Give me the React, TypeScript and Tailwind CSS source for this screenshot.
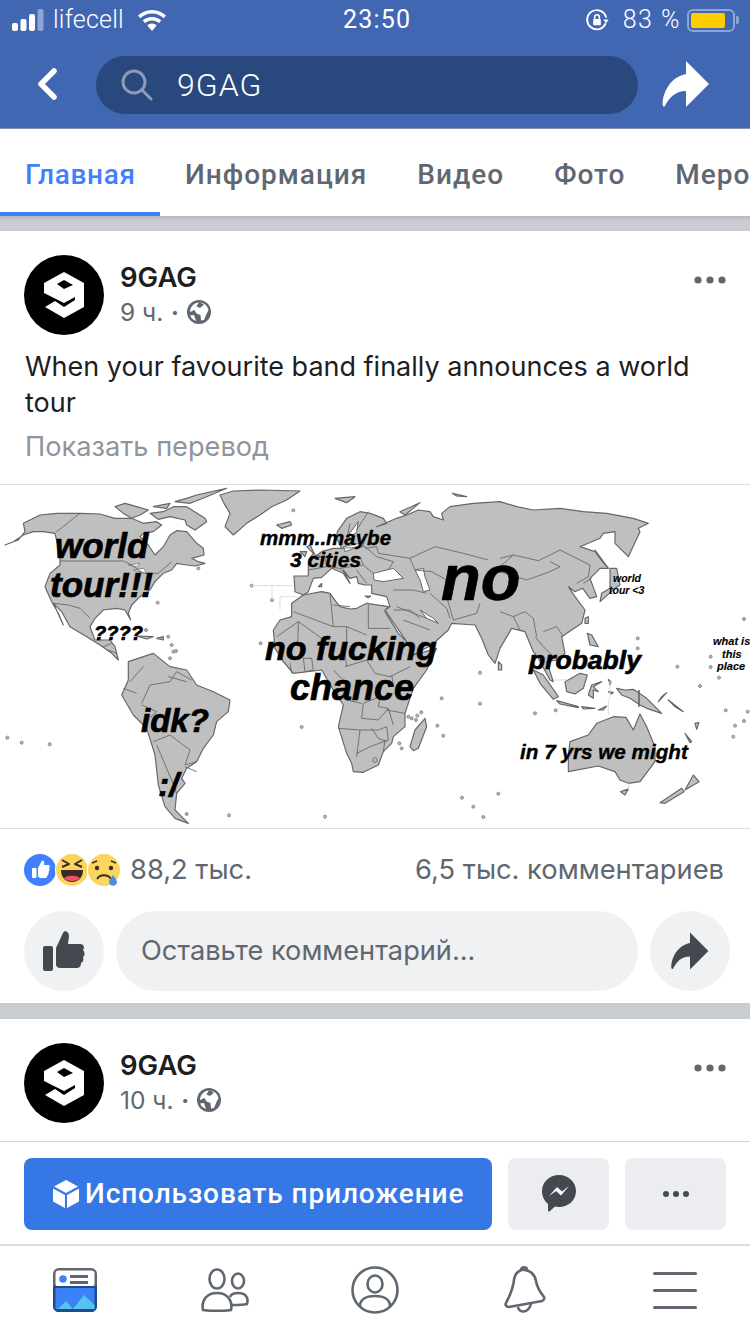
const land = [
  // Africa
  "M910,330 L965,320 L990,325 L1008,350 L1020,365 L1050,372 L1070,370 L1100,355 L1165,365 L1155,380 L1195,445 L1220,470 L1240,510 L1310,490 L1280,555 L1240,610 L1215,685 L1215,725 L1180,755 L1175,775 L1150,800 L1135,840 L1090,862 L1060,860 L1055,835 L1040,805 L1015,725 L1030,660 L1000,615 L965,555 L880,565 L850,530 L825,490 L820,435 L840,405 L875,395 L875,355 Z",
  // Eurasia
  "M910,330 L885,320 L882,273 L925,273 L925,230 L965,200 L1000,190 L1025,190 L1010,160 L1012,140 L1040,100 L1080,80 L1110,85 L1150,100 L1160,115 L1130,125 L1190,100 L1220,90 L1255,75 L1290,80 L1300,95 L1330,105 L1325,85 L1350,65 L1420,55 L1500,50 L1550,65 L1600,75 L1680,70 L1750,80 L1820,85 L1900,100 L1945,115 L1915,130 L1920,140 L1885,215 L1845,175 L1845,140 L1810,145 L1800,160 L1740,185 L1785,200 L1825,250 L1800,250 L1770,280 L1790,335 L1770,340 L1748,310 L1725,320 L1705,305 L1725,335 L1755,375 L1745,415 L1715,435 L1685,455 L1695,505 L1670,525 L1640,530 L1660,590 L1650,585 L1615,520 L1600,500 L1575,440 L1535,430 L1500,490 L1485,535 L1465,510 L1445,460 L1425,420 L1355,415 L1345,435 L1295,480 L1240,510 L1220,470 L1155,375 L1170,365 L1160,335 L1115,325 L1115,300 L1095,300 L1075,295 L1070,275 L1050,280 L1030,255 L1050,295 L1030,265 L995,250 L965,277 L940,280 L925,320 Z",
  // South America
  "M385,530 L430,515 L460,505 L510,545 L560,555 L590,600 L640,620 L690,645 L685,680 L650,710 L640,750 L610,790 L590,830 L560,850 L545,880 L555,895 L530,925 L525,975 L565,1015 L525,1000 L495,965 L475,900 L465,810 L440,730 L400,690 L365,630 L385,585 Z",
  // Greenland
  "M660,30 L700,18 L780,15 L900,18 L860,45 L815,65 L780,90 L740,115 L700,150 L675,125 L690,85 L672,55 Z",
  // small
  "M1495,530 L1505,540 L1505,555 L1495,555 Z",
  "M1230,785 L1245,735 L1275,700 L1280,725 L1255,790 L1240,797 Z",
  "M1755,400 L1765,395 L1765,415 L1755,415 Z",
  "M1762,445 L1775,450 L1795,485 L1770,480 Z",
  "M1785,195 L1825,250 L1800,220 Z",
  "M1830,250 L1850,250 L1860,300 L1845,310 L1800,350 L1805,325 L1830,310 Z",
];
const northAm = [
  "M15,165 L40,155 L55,150 L75,125 L70,100 L120,75 L170,70 L240,70 L300,72 L345,85 L395,85 L430,100 L470,95 L485,105 L460,125 L430,130 L420,140 L445,165 L465,195 L490,170 L510,135 L530,122 L560,125 L590,160 L610,175 L612,195 L575,205 L595,215 L615,220 L585,228 L560,225 L530,220 L515,240 L490,250 L465,275 L450,300 L420,320 L395,345 L385,370 L392,390 L375,360 L350,355 L310,360 L285,385 L270,410 L285,450 L330,450 L345,470 L355,510 L335,490 L300,465 L260,440 L210,410 L185,365 L160,340 L190,405 L175,370 L155,335 L135,290 L150,250 L180,225 L180,195 L165,130 L130,125 L100,125 L70,135 L40,155 Z",
  "M345,50 L375,40 L410,50 L445,60 L420,75 L395,85 L370,70 Z",
  "M450,70 L490,65 L520,50 L560,50 L615,85 L620,95 L585,120 L560,105 L555,90 L510,80 L475,88 Z",
  "M525,35 L560,25 L590,15 L680,-5 L620,20 L570,40 Z",
  "M460,50 L510,40 L500,55 Z",
  "M410,438 L460,440 L440,447 Z",
  "M470,445 L490,440 L490,450 Z",
];
const europeIslands = [
  "M80,105 L120,95 L125,105 L95,115 Z",
  "M255,25 L315,20 L290,38 Z",
  "M180,165 L195,195 L215,200 L175,210 L190,190 L170,170 Z",
  "M150,185 L170,185 L165,200 Z",
  "M450,65 L510,38 L465,75 Z",
  "M607,10 L650,20 L620,18 Z",
  "M205,290 L215,280 L215,290 Z",
  "M345,318 L362,318 L355,323 Z",
];
const water = [
  "M370,250 L430,235 L460,265 L400,275 L372,270 Z",
  "M495,240 L520,235 L525,260 L540,300 L520,305 L510,270 Z",
  "M510,360 L550,385 L565,400 L530,385 Z",
  "M295,135 L325,95 L320,125 L300,145 Z",
  "M280,170 L330,160 L345,145 L340,165 L285,185 Z",
];
const borderA = [
  "M130,365 L250,410 L290,410 L350,435", "M240,310 L250,410", "M355,345 L355,415 L420,415", "M80,440 L145,395 L215,445", "M145,395 L143,470", "M290,410 L290,460", "M250,345 L300,350",
  "M385,190 L480,205 L555,170 L640,190 L715,210", "M480,205 L495,240 L545,245 L590,270", "M590,320 L610,390 L680,370 L690,340", "M430,300 L490,300 L530,310", "M540,310 L590,355 L600,385", "M430,360 L480,360 L510,385", "M275,175 L345,170 L380,200 L430,215 L415,240", "M270,235 L340,225 L370,250", "M230,230 L270,235 L300,265", "M175,240 L230,230 L220,180", "M355,65 L320,120", "M345,175 L380,170 L385,190", "M300,100 L290,150", "M320,240 L350,280", "M300,210 L330,200 L340,225", "M440,350 L530,385", "M460,390 L540,420",
];
const borderB = ["M180,213 L370,213 L395,225 L430,250 L475,250 L515,215", "M240,70 L170,125", "M160,340 L205,345 L240,355 L270,385", "M310,470 L335,460", "M325,480 L350,490"];
const borderSA = ["M390,590 L430,545", "M425,655 L450,600 L510,590 L530,560 L575,585", "M425,660 L470,680 L430,715", "M460,770 L510,750 L570,795 L555,840 L590,830", "M470,780 L515,885 L530,925", "M555,845 L590,860", "M370,610 L410,625", "M505,575 L560,590"];
const borderD = ["M100,65 L130,100", "M160,55 L165,95 L190,90 L185,55 Z", "M285,40 L290,80", "M285,80 L350,60 L375,100 L420,110 L480,80", "M250,90 L290,130", "M425,105 L430,135", "M390,170 L340,190 L335,235 L385,240 L415,205 L385,200 L390,170", "M265,265 L330,270 L320,350", "M330,270 L385,270 L410,260 L415,300 L360,320 L320,340", "M365,265 L385,295 L410,305", "M410,210 L465,220", "M415,205 L430,255", "M400,335 L405,300", "M290,180 L335,190", "M120,70 L125,100"];
const borderC = ["M0,205 L40,195 L115,212 L180,180 L240,210 L270,225 L265,260 L230,280", "M0,245 L80,270 L150,245 L180,230 L150,215", "M250,280 L275,265", "M0,365 L40,380 L75,365 L100,385 L110,440", "M130,425 L170,410 L190,440", "M105,440 L130,470 L160,500", "M40,380 L60,420", "M0,230 L40,195"];
const east = [
  "M100,90 L130,105 L175,170 L160,178 L120,130 Z",
  "M195,125 L240,100 L262,105 L250,145 L225,162 L200,155 Z",
  "M170,182 L235,200 L235,203 L180,192 Z",
  "M245,200 L285,205 L250,207 Z",
  "M295,210 L320,198 L310,210 Z",
  "M265,165 L275,135 L305,125 L280,140 L295,155 L280,150 L280,175 Z",
  "M350,145 L375,150 L400,148 L440,175 L485,220 L440,205 L420,195 L390,175 L365,165 Z",
  "M205,345 L210,305 L265,285 L290,250 L340,230 L378,232 L400,270 L420,222 L440,260 L465,320 L465,365 L420,425 L385,430 L360,420 L345,395 L295,378 L205,395 Z",
  "M362,455 L385,447 L375,465 Z",
  "M480,488 L545,445 L552,455 L495,490 Z",
  "M555,450 L580,405 L597,425 Z",
  "M475,185 L500,158 L485,170 Z",
  "M505,180 L550,215 L525,200 Z",
  "M555,280 L575,305 L570,308 Z",
  "M585,250 L597,248 L590,268 Z",
  "M325,118 L333,125 L330,135 Z",
  "M325,155 L340,157 L335,162 Z",
];
const dots = [[22,758],[65,773],[149,778],[905,726],[560,987],[687,991],[975,995],[473,353],[595,250],[782,475],[880,76],[755,302],[816,345],[1386,938],[1420,965],[1450,996],[1495,926],[1440,563],[1325,640],[1440,656],[1605,685],[1667,676],[1913,460],[1913,490],[2032,545],[2100,603],[2132,515],[2132,546],[2157,578],[2232,402],[2177,676],[2205,722],[2243,680],[2232,708],[2200,755],[1312,722],[1330,752],[1235,700],[1248,705],[1198,775],[1205,790],[505,455],[515,480],[520,500],[510,520],[528,498],[438,435],[1225,695],[1252,692],[1264,682]];

function Logo() {
  return (
    <svg viewBox="0 0 80 80" className="w-[80px] h-[80px] shrink-0">
      <circle cx="40" cy="40" r="40" fill="#000" />
      <path fillRule="evenodd" fill="#fff" d="M40 17 L60 28 L60 52 L40 63 L21 52 L31 46 L40 52 L51 45 L51 42 L40 48 L20 38 L20 28 Z M33 29 L40 34 L49 30 L40 25 Z" />
    </svg>
  );
}
function Globe() {
  return (
    <svg viewBox="0 0 24 24" className="w-[24px] h-[24px]">
      <circle cx="12" cy="12" r="12" fill="#606770" />
      <path fill="#fff" d="M12 2.5 C17 2.5 20.5 5.5 21.5 10 L19.5 14 L17 20 L14 20.5 L13.5 15 L9.5 13.5 L7.5 10 L3 12 C3 7 7 2.5 12 2.5 Z M3 15.5 L7 15 L9 21 C6 20 4 18 3 15.5 Z" />
      <path fill="#606770" d="M12 2 L17 4.5 L13 8 L9.5 6.5 Z" />
    </svg>
  );
}
function Dots() {
  return (
    <svg viewBox="0 0 32 8" className="w-[32px] h-[8px]">
      <circle cx="4" cy="4" r="3.6" fill="#606770" /><circle cx="16" cy="4" r="3.6" fill="#606770" /><circle cx="28" cy="4" r="3.6" fill="#606770" />
    </svg>
  );
}
function Header({ time }: { time: string }) {
  return (
    <div className="flex pl-[24px] pr-[24px] pt-[24px] gap-[16px]">
      <Logo />
      <div className="flex flex-col flex-1">
        <div className="text-[27.5px] leading-[32px] font-semibold text-[#1c1e21] mt-[6px]">9GAG</div>
        <div className="flex items-center text-[24.5px] leading-[36px] text-[#606770] mt-[1px]">
          <span>{time}</span>
          <span className="mx-[8px] text-[13px]">•</span>
          <Globe />
        </div>
      </div>
      <div className="mt-[21px]"><Dots /></div>
    </div>
  );
}

export default function App() {
  return (
    <div className="w-[750px] h-[1334px] overflow-hidden flex flex-col bg-white font-['Inter','Liberation_Sans',sans-serif]">
      {/* status bar */}
      <div className="h-[40px] shrink-0 bg-[#4267b2] flex items-center justify-between pl-[12px] pr-[11px] text-white relative">
        <div className="flex items-center">
          <svg viewBox="0 0 32 22" className="w-[32px] h-[22px]">
            <rect x="0" y="14" width="6" height="8" rx="2" fill="#fff" />
            <rect x="8.5" y="10" width="6" height="12" rx="2" fill="#fff" />
            <rect x="17" y="5" width="6" height="17" rx="2" fill="#fff" />
            <rect x="25.5" y="0" width="6" height="22" rx="2" fill="#8ea4d2" />
          </svg>
          <span className="ml-[9px] text-[25px] leading-[30px] font-['Roboto',sans-serif] font-light tracking-[0.2px]">lifecell</span>
          <svg viewBox="0 0 28 21" className="ml-[14px] w-[28px] h-[21px]" fill="#fff">
            <path d="M14 0 C19.5 0 24.4 2.2 28 5.6 L25.6 8.2 C22.6 5.4 18.5 3.6 14 3.6 C9.5 3.6 5.4 5.4 2.4 8.2 L0 5.6 C3.6 2.2 8.5 0 14 0 Z" />
            <path d="M14 7 C17.6 7 20.9 8.4 23.3 10.6 L20.9 13.2 C19.1 11.5 16.7 10.5 14 10.5 C11.3 10.5 8.9 11.5 7.1 13.2 L4.7 10.6 C7.1 8.4 10.4 7 14 7 Z" />
            <path d="M14 13.6 C15.9 13.6 17.4 14.3 18.6 15.4 L14 21 L9.4 15.4 C10.6 14.3 12.1 13.6 14 13.6 Z" />
          </svg>
        </div>
        <span className="absolute left-[343px] top-[5px] text-[25px] leading-[30px] font-['Roboto',sans-serif] tracking-[1.2px]">23:50</span>
        <div className="flex items-center">
          <svg viewBox="0 0 24 24" className="w-[23px] h-[23px]" fill="none" stroke="#fff" strokeWidth="2">
            <path d="M20.5 15 A10 10 0 1 1 21 9" />
            <path d="M23.5 11 L18 11 L21 15 Z" fill="#fff" stroke="none" />
            <rect x="7.5" y="10.5" width="8" height="6.5" rx="1" fill="#fff" stroke="none" />
            <path d="M9 11 V8.5 a2.5 2.5 0 0 1 5 0 V11" strokeWidth="1.6" />
          </svg>
          <span className="ml-[14px] text-[25px] leading-[30px] font-['Roboto',sans-serif] font-light tracking-[1.5px]">83 %</span>
          <div className="ml-[6px] w-[48px] h-[23px] rounded-[6px] border-2 border-[#8ea4d2] p-[2px]">
            <div className="w-[34px] h-[15px] bg-[#ffcc00] rounded-[2px]" />
          </div>
          <div className="ml-[1px] w-[3px] h-[8px] rounded-r-[2px] bg-[#8ea4d2]" />
        </div>
      </div>
      {/* nav */}
      <div className="h-[89px] shrink-0 bg-[#4267b2] border-b border-[#8592ab] flex items-center pl-[36px]">
        <svg viewBox="0 0 22 34" className="w-[22px] h-[34px]" fill="none" stroke="#fff" strokeWidth="5.5" strokeLinecap="round" strokeLinejoin="round">
          <path d="M18 4 L5 17 L18 30" />
        </svg>
        <div className="ml-[38px] mt-[2px] w-[542px] h-[58px] rounded-[29px] bg-[#29487d] flex items-center pl-[25px]">
          <svg viewBox="0 0 32 32" className="w-[32px] h-[32px]" fill="none" stroke="#8f9bb5" strokeWidth="3" strokeLinecap="round">
            <circle cx="13" cy="13" r="11" />
            <path d="M21 21 L30 30" />
          </svg>
          <span className="ml-[24px] text-[32px] text-white font-['Roboto',sans-serif] font-light tracking-[1px] leading-[36px]">9GAG</span>
        </div>
        <svg viewBox="0 0 50 50" className="ml-[23px] w-[50px] h-[50px]" fill="#fff">
          <path d="M25 2 L48 25 L25 48 L25 32 C14 32 8 39 4 47 C1 50 1 42 3 36 C7 24 15 17 25 15 Z" />
        </svg>
      </div>
      {/* tabs */}
      <div className="h-[87px] shrink-0 bg-white flex overflow-hidden text-[28px] font-medium text-[#606770] font-['Roboto','Inter',sans-serif] tracking-[1px] whitespace-nowrap">
        <div className="pl-[25px] pt-[8px] w-[160px] shrink-0 flex items-center border-b-4 border-[#4080ff] text-[#4080ff] tracking-[0.7px]">Главная</div>
        <div className="px-[25px] pt-[4px] shrink-0 flex items-center">Информация</div>
        <div className="px-[25px] pt-[4px] shrink-0 flex items-center">Видео</div>
        <div className="px-[25px] pt-[4px] shrink-0 flex items-center">Фото</div>
        <div className="pl-[25px] pt-[4px] shrink-0 flex items-center">Меро</div>
      </div>
      <div className="h-[15px] shrink-0 bg-gradient-to-b from-[#b5b7bb] from-0% to-[#c9ccd1] to-30%" />
      {/* post */}
      <div className="shrink-0 bg-white">
        <Header time="9 ч." />
        <div className="pl-[25px] pr-[24px] pt-[14px] text-[27px] leading-[36px] text-[#1c1e21]">When your favourite band finally announces a world tour</div>
        <div className="pl-[25px] pt-[8px] pb-[19px] text-[27.2px] leading-[36px] text-[#90949c]">Показать перевод</div>
        <div className="relative h-[345px] border-y border-[#dadde1] overflow-hidden italic font-bold text-black font-['Liberation_Sans',sans-serif] [-webkit-text-stroke:0.7px_#000]">
          <svg viewBox="0 0 2250 1032" className="w-[750px] h-[344px] blur-[0.4px]">
            <g fill="#bfbfbf" stroke="#666" strokeWidth="3.5" strokeLinejoin="round">
              {land.map((d, i) => <path key={i} d={d} />)}
              <g transform="translate(0,15)">{northAm.map((d, i) => <path key={i} d={d} />)}</g>
              <g transform="translate(750,15)">{europeIslands.map((d, i) => <path key={i} d={d} />)}</g>
              <g transform="translate(1500,465)">{east.map((d, i) => <path key={i} d={d} />)}</g>
            </g>
            <g transform="translate(750,15)" fill="#fff" stroke="#666" strokeWidth="3" strokeLinejoin="round">
              {water.map((d, i) => <path key={i} d={d} />)}
            </g>
            <g transform="translate(0,15)" fill="#fff" stroke="#666" strokeWidth="2">
              <path d="M385,225 L420,220 L410,230 Z" />
              <path d="M400,240 L430,235 L440,250 L420,245 Z" />
            </g>
            <g fill="none" stroke="#666" strokeWidth="2.6" strokeLinejoin="round">
              <g transform="translate(750,15)">{borderA.map((d, i) => <path key={i} d={d} />)}</g>
              <g transform="translate(0,15)">{borderB.map((d, i) => <path key={i} d={d} />)}</g>
              {borderSA.map((d, i) => <path key={i} d={d} />)}
              <g transform="translate(750,465)">{borderD.map((d, i) => <path key={i} d={d} />)}<circle cx="375" cy="360" r="7" /></g>
              <g transform="translate(1500,15)">{borderC.map((d, i) => <path key={i} d={d} />)}</g>
            </g>
            <path d="M1917,615 V665" stroke="#666" strokeWidth="5" fill="none" />
            <g fill="#bfbfbf" stroke="#777" strokeWidth="2.5">
              {dots.map(([x, y], i) => <circle key={i} cx={x} cy={y} r="4.5" />)}
            </g>
            <path d="M755,302 H880 M816,302 V345 M840,375 V335 H900 M1660,585 H1700 M1825,590 H1830 V640 M1825,640 V690 M1885,895 V910" fill="none" stroke="#ddd" strokeWidth="3" />
          </svg>
          <span className="absolute left-[55px] top-[41px] text-[35px] leading-[40px]">world</span>
          <span className="absolute left-[50px] top-[80px] text-[35px] leading-[40px]">tour!!!</span>
          <span className="absolute left-[94px] top-[136px] text-[20px] leading-[24px]">????</span>
          <span className="absolute left-[141px] top-[216px] text-[33px] leading-[40px]">idk?</span>
          <span className="absolute left-[158px] top-[279px] text-[34px] leading-[40px]">:/</span>
          <span className="absolute left-[260px] top-[41px] text-[20.5px] leading-[24px] [-webkit-text-stroke:0.4px_#000]">mmm..maybe</span>
          <span className="absolute left-[290px] top-[63px] text-[21px] leading-[24px] [-webkit-text-stroke:0.4px_#000]">3 cities</span>
          <span className="absolute left-[265px] top-[143px] text-[34px] leading-[40px]">no fucking</span>
          <span className="absolute left-[290px] top-[183px] text-[36px] leading-[40px]">chance</span>
          <span className="absolute left-[441px] top-[58px] text-[65px] leading-[70px]">no</span>
          <span className="absolute left-[613px] top-[87px] text-[10.5px] leading-[12px] [-webkit-text-stroke:0.1px_#000]">world</span>
          <span className="absolute left-[609px] top-[99px] text-[10.5px] leading-[12px] [-webkit-text-stroke:0.1px_#000]">tour &lt;3</span>
          <span className="absolute left-[529px] top-[159px] text-[26.5px] leading-[32px]">probably</span>
          <span className="absolute left-[713px] top-[150px] text-[11px] leading-[13px] whitespace-nowrap [-webkit-text-stroke:0.1px_#000]">what is</span>
          <span className="absolute left-[722px] top-[163px] text-[11px] leading-[13px] [-webkit-text-stroke:0.1px_#000]">this</span>
          <span className="absolute left-[717px] top-[175px] text-[11px] leading-[13px] [-webkit-text-stroke:0.1px_#000]">place</span>
          <span className="absolute left-[520px] top-[255px] text-[20.7px] leading-[24px] whitespace-nowrap [-webkit-text-stroke:0.4px_#000]">in 7 yrs we might</span>
        </div>
        {/* stats */}
        <div className="h-[82px] flex items-center justify-between pl-[24px] pr-[26px] text-[27.3px] text-[#606770]">
          <div className="flex items-center">
            <svg viewBox="0 0 96 32" className="w-[96px] h-[32px]">
              <circle cx="16" cy="16" r="16" fill="#4080ff" />
              <rect x="8" y="14" width="4.5" height="10" rx="1" fill="#fff" />
              <path fill="#fff" d="M14 14 L18 6.5 C20 6 20.5 8 20 11 L24.5 11 C26 11 26 13 25 14 C26 15.5 25.5 17 24.5 17.5 C25 19 24.5 20.5 23.5 21 C23.5 23 22.5 24 21 24 L16 24 L14 22.5 Z" />
              <circle cx="48" cy="16" r="17" fill="#fff" />
              <circle cx="48" cy="16" r="16" fill="#fcd561" />
              <path d="M37 16 H59 C59 24 54 28 48 28 C42 28 37 24 37 16 Z" fill="#3d2a26" />
              <path d="M40 24 C44 21 52 21 56 24 C53 28 43 28 40 24 Z" fill="#f25268" />
              <path d="M38 6 L45 10 L38 13 M58 6 L51 10 L58 13" fill="none" stroke="#3d2a26" strokeWidth="2" strokeLinejoin="round" />
              <circle cx="80" cy="16" r="17" fill="#fff" />
              <circle cx="80" cy="16" r="16" fill="#fcd561" />
              <circle cx="73" cy="14" r="2.2" fill="#3d2a26" /><circle cx="87" cy="14" r="2.2" fill="#3d2a26" />
              <path d="M68 9 L73 7 M92 9 L87 7" stroke="#3d2a26" strokeWidth="1.6" fill="none" />
              <path d="M73 25 C76 20 84 20 87 25" stroke="#3d2a26" strokeWidth="2" fill="none" />
              <path d="M89 21 C91 24 93 26 93 28 C93 33 85 33 85 28 C85 26 87 24 89 21 Z" fill="#4a90e2" />
            </svg>
            <span className="ml-[10px]">88,2 тыс.</span>
          </div>
          <span>6,5 тыс. комментариев</span>
        </div>
        {/* comment */}
        <div className="flex items-center pl-[24px] pr-[20px] gap-[12px] h-[80px]">
          <div className="w-[80px] h-[80px] rounded-full bg-[#f0f1f3] flex items-center justify-center">
            <svg viewBox="0 0 42 40" className="w-[42px] h-[40px]" fill="#444950">
              <rect x="0" y="15" width="10" height="25" rx="2" />
              <path d="M13 17 L20 2 C21 -1 26 0 26 5 L25 13 L37 13 C41 13 42 17 40 19 C42 21 42 25 40 26 C41 29 40 31 38 32 C38 36 36 37 33 37 L18 37 C15 37 13 36 13 33 Z" />
            </svg>
          </div>
          <div className="w-[522px] h-[80px] rounded-[40px] bg-[#f0f1f3] flex items-center pl-[25px] text-[27.2px] text-[#606770]">Оставьте комментарий...</div>
          <div className="w-[80px] h-[80px] rounded-full bg-[#f0f1f3] flex items-center justify-center">
            <svg viewBox="0 0 50 50" className="w-[40px] h-[40px]" fill="#444950">
              <path d="M25 2 L48 25 L25 48 L25 32 C14 32 8 39 4 47 C1 50 1 42 3 36 C7 24 15 17 25 15 Z" />
            </svg>
          </div>
        </div>
        <div className="mt-[12px] h-[16px] bg-[#c9ccd1]" />
      </div>
      {/* second post */}
      <div className="flex-1 min-h-0 overflow-hidden bg-white border-b border-[#d5d5d5]">
        <Header time="10 ч." />
      </div>
      {/* app bar */}
      <div className="h-[104px] shrink-0 pt-[2px] bg-white border-b-2 border-[#dcdcdc] flex items-center pl-[24px] pr-[24px]">
        <div className="w-[468px] h-[72px] rounded-[8px] bg-[#3578e5] flex items-center pl-[29px] text-white text-[28px] font-medium font-['Roboto','Inter',sans-serif] tracking-[0.9px] whitespace-nowrap">
          <svg viewBox="0 0 26 28" className="w-[26px] h-[28px] shrink-0" fill="#fff">
            <path d="M13 0 L25 6.5 L13 13 L1 6.5 Z" />
            <path d="M0 8.5 L12 15 L12 28 L0 21.5 Z" />
            <path d="M26 8.5 L14 15 L14 28 L26 21.5 Z" />
          </svg>
          <span className="ml-[6px]">Использовать приложение</span>
        </div>
        <div className="ml-[16px] w-[101px] h-[72px] rounded-[8px] bg-[#ebedf0] flex items-center justify-center">
          <svg viewBox="0 0 34 38" className="w-[34px] h-[38px]">
            <path fill="#444950" d="M17 0 C26.5 0 34 7 34 16 C34 25 26.5 32 17 32 C15.5 32 14 31.8 13 31.5 L8 36 C7 37 6 36.5 6 35 L6 29 C2.5 26 0 21.5 0 16 C0 7 7.5 0 17 0 Z" />
            <path fill="#fff" d="M7 21 L15 12 L20 16.5 L27 11 L19 20.5 L14 16 Z" />
          </svg>
        </div>
        <div className="ml-[16px] w-[101px] h-[72px] rounded-[8px] bg-[#ebedf0] flex items-center justify-center">
          <svg viewBox="0 0 26 6" className="w-[26px] h-[6px]" fill="#444950">
            <circle cx="3" cy="3" r="3" /><circle cx="13" cy="3" r="3" /><circle cx="23" cy="3" r="3" />
          </svg>
        </div>
      </div>
      {/* bottom nav */}
      <div className="h-[88px] shrink-0 bg-white grid grid-cols-5">
        <div className="flex items-center justify-center">
          <svg viewBox="0 0 44 44" className="w-[44px] h-[44px]">
            <rect x="0" y="0" width="44" height="44" rx="6" fill="#606770" />
            <rect x="2.5" y="2.5" width="39" height="16" rx="3" fill="#fff" />
            <circle cx="10" cy="11" r="3.8" fill="#4080ff" />
            <rect x="17" y="7" width="18" height="3" fill="#606770" /><rect x="17" y="13" width="18" height="3" fill="#606770" />
            <path d="M0 18 H44 V38 C44 42 41 44 38 44 H6 C3 44 0 42 0 38 Z" fill="#1d4e89" />
            <rect x="2.5" y="20" width="39" height="21" fill="#3b82f6" />
            <path d="M20 41 L31 27 L41.5 37 V41 Z" fill="#56c5ee" />
            <path d="M5 41 L13 33 L20 41 Z" fill="#56c5ee" />
          </svg>
        </div>
        <div className="flex items-center justify-center">
          <svg viewBox="0 0 48 44" className="w-[48px] h-[44px]" fill="none" stroke="#606770" strokeWidth="2.6">
            <ellipse cx="16" cy="11" rx="7.5" ry="9.5" />
            <ellipse cx="37" cy="13" rx="6" ry="7.5" />
            <path d="M2 42 C0 32 6 25 16 25 C26 25 32 32 30 42 C22 43 10 43 2 42 Z" />
            <path d="M29 29 C30 26 33 25 37 25 C44 25 48 29 46 36 C42 37 37 37 31 37" />
          </svg>
        </div>
        <div className="flex items-center justify-center">
          <svg viewBox="0 0 48 48" className="w-[48px] h-[48px]" fill="none" stroke="#606770" strokeWidth="2.6">
            <circle cx="24" cy="24" r="22.5" />
            <ellipse cx="24" cy="18" rx="7.5" ry="8.5" />
            <path d="M9 40 C9 34 14 30 24 30 C34 30 39 34 39 40" />
          </svg>
        </div>
        <div className="flex items-center justify-center">
          <svg viewBox="0 0 42 48" className="w-[42px] h-[48px]" fill="none" stroke="#606770" strokeWidth="2.6" strokeLinejoin="round">
            <path d="M17 4 C17 0.5 23 0.5 23 4" />
            <path d="M10 14 C11 6 17 3 21 4 C27 5 31 9 32 15 C33 22 36 26 40 31 C41 33 40 34 38 35 L5 41 C2 41 1 39 2 37 C5 31 9 24 10 14 Z" />
            <path d="M14 41 C15 47 24 48 27 38" />
          </svg>
        </div>
        <div className="flex flex-col items-center justify-center gap-[14px]">
          <div className="w-[44px] h-[3px] rounded-full bg-[#606770]" />
          <div className="w-[44px] h-[3px] rounded-full bg-[#606770]" />
          <div className="w-[44px] h-[3px] rounded-full bg-[#606770]" />
        </div>
      </div>
    </div>
  );
}
